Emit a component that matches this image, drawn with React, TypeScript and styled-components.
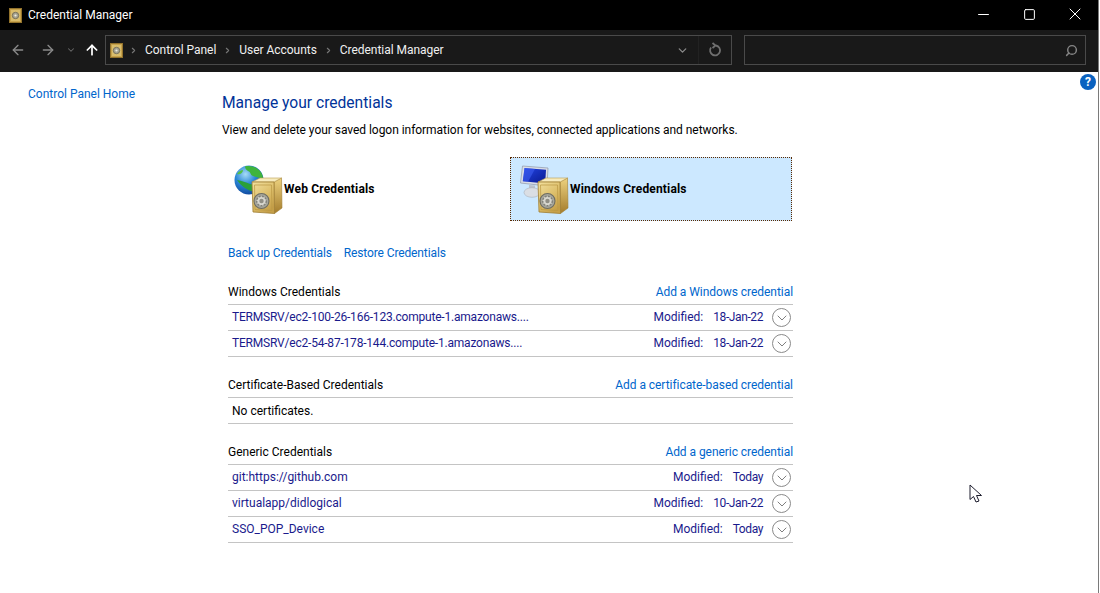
import React, { FC } from "react";
import styled, { createGlobalStyle } from "styled-components";
import { ArrowLeft, ArrowRight, ArrowUp, ChevronDown, ChevronRight, Search, Minus, Square, X } from "lucide-react";

const GlobalStyle = createGlobalStyle`
  html, body {
    margin: 0;
    padding: 0;
    background: #fff;
    overflow: hidden;
  }
  body {
    font-family: Roboto, "Noto Sans", sans-serif;
    font-size: 12px;
  }
`;

const SafeSmall: FC = () => (
  <svg width="13" height="15" viewBox="0 0 13 15">
    <rect x="0.5" y="0.5" width="12" height="14" fill="#c7a24c" stroke="#93732c" />
    <rect x="2" y="2" width="9" height="11" fill="#d9bd6c" />
    <circle cx="6.5" cy="7.5" r="3.2" fill="#a8a592" stroke="#76705a" />
    <circle cx="6.5" cy="7.5" r="1.1" fill="#ecebe2" />
  </svg>
);

const SafeLarge: FC<{ id: string }> = ({ id }) => (
  <SafeSvg width="32" height="38" viewBox="0 0 32 38">
    <defs>
      <linearGradient id={`${id}Front`} x1="0" y1="0" x2="0.6" y2="1">
        <stop offset="0" stopColor="#f2e09e" />
        <stop offset="0.6" stopColor="#dcbd68" />
        <stop offset="1" stopColor="#c6a04a" />
      </linearGradient>
      <linearGradient id={`${id}Side`} x1="0" y1="0" x2="0" y2="1">
        <stop offset="0" stopColor="#edd27f" />
        <stop offset="1" stopColor="#a47c2c" />
      </linearGradient>
    </defs>
    <path d="M23 5 L30.5 1 L31 31 L23.5 36.5 Z" fill={`url(#${id}Side)`} stroke="#a07e32" strokeWidth="0.6" />
    <path d="M1 5 L9 1 L30.5 1 L23 5 Z" fill="#f7ebbd" stroke="#bb9b4e" strokeWidth="0.6" />
    <path d="M1 5 L23 5 L23.5 36.5 L2 35 Z" fill={`url(#${id}Front)`} stroke="#a07e32" strokeWidth="0.8" />
    <path d="M3.5 8 L20.5 8 L21 33.5 L4 32.5 Z" fill="none" stroke="#b99642" strokeWidth="0.7" />
    <circle cx="10.5" cy="24" r="7.5" fill="#a6a69c" stroke="#6d6c62" strokeWidth="1.1" />
    <circle cx="10.5" cy="24" r="4.8" fill="#d8d7cf" stroke="#80807a" strokeWidth="1.4" strokeDasharray="2 1.2" />
    <circle cx="10.5" cy="24" r="2.2" fill="#8f8e85" />
  </SafeSvg>
);

const Globe: FC = () => (
  <GlobeSvg width="30" height="30" viewBox="0 0 30 30">
    <defs>
      <radialGradient id="sea" cx="0.38" cy="0.3" r="0.8">
        <stop offset="0" stopColor="#a6dcf6" />
        <stop offset="0.45" stopColor="#2a86d6" />
        <stop offset="1" stopColor="#0a3c92" />
      </radialGradient>
    </defs>
    <circle cx="15" cy="15" r="14.5" fill="url(#sea)" />
    <path d="M11 1.5 C16 0 22 2 25 5 C28 8 29 11 29 14 C25 13 22 12 19 11 C16 10 17 7 14 6 C12 5 11 3 11 1.5 Z" fill="#3fb43c" />
    <path d="M3 15 C8 16 12 17 16 19 C19 20 23 20 25 19 C24 23 20 26 17 26 C12 24 7 21 3 15 Z" fill="#2aa03a" />
    <path d="M3 9 C5 6 7 5 9 5 C9 8 6 10 3 9 Z" fill="#55c048" />
  </GlobeSvg>
);

const Monitor: FC = () => (
  <MonitorSvg width="29" height="33" viewBox="0 0 29 33">
    <defs>
      <linearGradient id="screen" x1="0" y1="0" x2="1" y2="1">
        <stop offset="0" stopColor="#2244e4" />
        <stop offset="1" stopColor="#0a1a8f" />
      </linearGradient>
    </defs>
    <path d="M2.5 1 L28 3 L27 21 L0.5 18 Z" fill="#d9dde7" stroke="#8e96a8" strokeWidth="0.7" />
    <path d="M4.5 3 L26 4.8 L25.2 18.5 L2.8 16.2 Z" fill="url(#screen)" />
    <path d="M4.5 3 L15 3.9 L8 16.7 L2.8 16.2 Z" fill="#3f60f2" opacity="0.55" />
    <path d="M9 20 L15 20.5 L15 25 L9 25 Z" fill="#bcc2cc" />
    <ellipse cx="12" cy="27.5" rx="8" ry="4.8" fill="#dadee4" stroke="#aab0ba" strokeWidth="0.6" />
  </MonitorSvg>
);

const Refresh: FC = () => (
  <svg width="14" height="16" viewBox="0 0 14 16" fill="none" stroke="#6f6f6f" strokeWidth="1.8">
    <path d="M8 3.5 A5 5 0 1 1 3 5.5" />
    <path d="M4.5 1 L7.5 3.5 L4.5 6" />
  </svg>
);

const Row: FC<{ name: string; date: string; $tight?: boolean }> = ({ name, date, $tight }) => (
  <ListRow>
    <RowName $tight={$tight}>{name}</RowName>
    <RowMeta>
      <span>Modified:</span>
      <RowDate>{date}</RowDate>
    </RowMeta>
    <Expander>
      <ChevronDown size={16} absoluteStrokeWidth strokeWidth={1} color="#7f7f7f" />
    </Expander>
  </ListRow>
);

const Section: FC<{ title: string; action: string; children: React.ReactNode }> = ({
  title,
  action,
  children,
}) => (
  <SectionBox>
    <SectionHeader>
      <span>{title}</span>
      <HeaderLink>{action}</HeaderLink>
    </SectionHeader>
    {children}
  </SectionBox>
);

const App: FC = () => {
  return (
    <Window>
      <GlobalStyle />
      <TitleBar>
        <TitleLeft>
          <SafeSmall />
          <span>Credential Manager</span>
        </TitleLeft>
        <WindowButtons>
          <WinBtn>
            <Minus size={17} absoluteStrokeWidth strokeWidth={1} color="#fff" />
          </WinBtn>
          <WinBtn>
            <Square size={13} absoluteStrokeWidth strokeWidth={1} color="#fff" />
          </WinBtn>
          <WinBtn>
            <X size={20} absoluteStrokeWidth strokeWidth={1} color="#fff" />
          </WinBtn>
        </WindowButtons>
      </TitleBar>
      <NavBar>
        <NavButtons>
          <ArrowLeft size={16} strokeWidth={2} color="#8a8a8a" />
          <ArrowRight size={16} strokeWidth={2} color="#8a8a8a" />
          <ChevronDown size={10} strokeWidth={2.5} color="#6a6a6a" />
          <ArrowUp size={16} strokeWidth={2.6} color="#fff" />
        </NavButtons>
        <AddressBar>
          <SafeSmall />
          <Crumbs>
            <ChevronRight size={9} strokeWidth={3} color="#777" />
            <span>Control Panel</span>
            <ChevronRight size={9} strokeWidth={3} color="#777" />
            <span>User Accounts</span>
            <ChevronRight size={9} strokeWidth={3} color="#777" />
            <span>Credential Manager</span>
          </Crumbs>
          <AddressTools>
            <ChevronDown size={13} strokeWidth={2.4} color="#8a8a8a" />
            <RefreshBox>
              <Refresh />
            </RefreshBox>
          </AddressTools>
        </AddressBar>
        <SearchBox>
          <Search size={13} strokeWidth={2.7} color="#858585" style={{ transform: "scaleX(-1)" }} />
        </SearchBox>
      </NavBar>
      <Content>
        <Sidebar>
          <Link>Control Panel Home</Link>
        </Sidebar>
        <Main>
          <Heading>Manage your credentials</Heading>
          <Description>
            View and delete your saved logon information for websites, connected applications and networks.
          </Description>
          <Tiles>
            <Tile>
              <IconStack>
                <Globe />
                <SafeLarge id="webSafe" />
              </IconStack>
              <TileLabel>Web Credentials</TileLabel>
            </Tile>
            <Tile $selected>
              <IconStack>
                <Monitor />
                <SafeLarge id="winSafe" />
              </IconStack>
              <TileLabel>Windows Credentials</TileLabel>
            </Tile>
          </Tiles>
          <Actions>
            <Link>Back up Credentials</Link>
            <Link>Restore Credentials</Link>
          </Actions>
          <Section title="Windows Credentials" action="Add a Windows credential">
            <Row $tight name="TERMSRV/ec2-100-26-166-123.compute-1.amazonaws...." date="18-Jan-22" />
            <Row $tight name="TERMSRV/ec2-54-87-178-144.compute-1.amazonaws...." date="18-Jan-22" />
          </Section>
          <Section title="Certificate-Based Credentials" action="Add a certificate-based credential">
            <EmptyRow>No certificates.</EmptyRow>
          </Section>
          <Section title="Generic Credentials" action="Add a generic credential">
            <Row name="git:https://github.com" date="Today" />
            <Row name="virtualapp/didlogical" date="10-Jan-22" />
            <Row name="SSO_POP_Device" date="Today" />
          </Section>
        </Main>
        <HelpBadge>?</HelpBadge>
      </Content>
      <Pointer width="14" height="20" viewBox="0 0 14 20">
        <path
          d="M1 1 L1 15.5 L4.5 12.5 L7 18 L10 17 L7.5 11.5 L12.5 11.5 Z"
          fill="#fff"
          stroke="#1c1c2c"
          strokeWidth="1"
        />
      </Pointer>
    </Window>
  );
};

const Window = styled.div`
  position: relative;
  width: 1099px;
  height: 593px;
  box-sizing: border-box;
  border-right: 1px solid #7a7a7a;
  display: flex;
  flex-direction: column;
  background: #fff;
  color: #000;
`;

const TitleBar = styled.div`
  height: 30px;
  flex: none;
  background: #000;
  color: #fff;
  display: flex;
  align-items: center;
  justify-content: space-between;
`;

const TitleLeft = styled.div`
  display: flex;
  align-items: center;
  gap: 6px;
  padding-left: 9px;
`;

const WindowButtons = styled.div`
  display: flex;
`;

const WinBtn = styled.div`
  width: 46px;
  height: 28px;
  padding-bottom: 2px;
  display: flex;
  align-items: center;
  justify-content: center;
`;

const NavBar = styled.div`
  height: 42px;
  flex: none;
  background: #191919;
  display: flex;
  align-items: flex-start;
  padding: 5px 12px 0 10px;
  box-sizing: border-box;
`;

const NavButtons = styled.div`
  width: 95px;
  height: 29px;
  display: grid;
  grid-template-columns: 30px 26px 18px 16px;
  align-items: center;
  flex: none;
`;

const AddressBar = styled.div`
  width: 627px;
  height: 30px;
  box-sizing: border-box;
  border: 1px solid #4a4a4a;
  flex: none;
  display: flex;
  align-items: center;
  padding-left: 4px;
  color: #f0f0f0;
`;

const Crumbs = styled.div`
  flex: 1;
  display: flex;
  align-items: center;
  gap: 7px;
  padding-left: 6px;
  letter-spacing: -0.04px;
`;

const AddressTools = styled.div`
  display: flex;
  align-items: center;
  height: 100%;
  gap: 9px;
`;

const RefreshBox = styled.div`
  width: 32px;
  height: 100%;
  border-left: 1px solid #222;
  display: flex;
  align-items: center;
  justify-content: center;
`;

const SearchBox = styled.div`
  width: 342px;
  height: 30px;
  margin-left: 12px;
  box-sizing: border-box;
  border: 1px solid #4a4a4a;
  flex: none;
  display: flex;
  align-items: center;
  justify-content: flex-end;
  padding-right: 7px;
`;

const Content = styled.div`
  position: relative;
  flex: 1;
  display: flex;
  min-height: 0;
`;

const Sidebar = styled.div`
  width: 222px;
  flex: none;
  box-sizing: border-box;
  padding: 14px 0 0 28px;
`;

const Main = styled.div`
  width: 572px;
  display: flex;
  flex-direction: column;
`;

const Link = styled.a`
  color: #0066cc;
  line-height: 16px;
`;

const HeaderLink = styled(Link)`
  letter-spacing: -0.05px;
`;

const Heading = styled.h1`
  margin: 20px 0 0;
  font-size: 15.6px;
  font-weight: 400;
  line-height: 22px;
  color: #003399;
`;

const Description = styled.p`
  margin: 8px 0 0;
  line-height: 17px;
  letter-spacing: -0.04px;
`;

const Tiles = styled.div`
  display: flex;
  gap: 4px;
  margin: 18px 0 0 2px;
`;

const Tile = styled.div<{ $selected?: boolean }>`
  width: 282px;
  height: 64px;
  box-sizing: border-box;
  display: flex;
  align-items: center;
  padding-left: 9px;
  background: ${(p) => (p.$selected ? "#cce8ff" : "transparent")};
  border: 1px dotted ${(p) => (p.$selected ? "#5c2a00" : "transparent")};
`;

const IconStack = styled.div`
  position: relative;
  width: 50px;
  height: 50px;
  flex: none;
`;

const GlobeSvg = styled.svg`
  position: absolute;
  left: 0;
  top: 1px;
`;

const MonitorSvg = styled.svg`
  position: absolute;
  left: 0;
  top: 1px;
`;

const SafeSvg = styled.svg`
  position: absolute;
  left: 17px;
  top: 13px;
`;

const TileLabel = styled.span`
  font-weight: 700;
  font-size: 12px;
  letter-spacing: 0.17px;
`;

const Actions = styled.div`
  display: flex;
  gap: 12px;
  margin: 24px 0 0 6px;
  line-height: 16px;
  letter-spacing: -0.12px;
`;

const SectionBox = styled.section`
  margin: 15px 0 0 6px;
  width: 565px;

  &:first-of-type {
    margin-top: 18px;
  }
`;

const SectionHeader = styled.div`
  height: 26px;
  box-sizing: border-box;
  display: flex;
  align-items: center;
  justify-content: space-between;
  border-bottom: 1px solid #c4c4c4;
`;

const ListRow = styled.div`
  height: 26px;
  box-sizing: border-box;
  display: flex;
  align-items: center;
  padding: 0 2px 0 4px;
  border-bottom: 1px solid #c4c4c4;
  color: #1a1a8c;
`;

const RowName = styled.span<{ $tight?: boolean }>`
  flex: 1;
  padding-bottom: 2px;
  letter-spacing: ${(p) => (p.$tight ? "-0.2px" : "0")};
`;

const RowMeta = styled.span`
  display: flex;
  gap: 10px;
  padding-bottom: 2px;
`;

const RowDate = styled.span`
  letter-spacing: -0.4px;
`;

const Expander = styled.span`
  width: 19px;
  height: 19px;
  margin-left: 9px;
  box-sizing: border-box;
  border: 1px solid #8a8a8a;
  border-radius: 50%;
  display: flex;
  align-items: center;
  justify-content: center;
`;

const EmptyRow = styled.div`
  height: 26px;
  box-sizing: border-box;
  display: flex;
  align-items: center;
  padding-left: 4px;
  border-bottom: 1px solid #c4c4c4;
`;

const HelpBadge = styled.span`
  position: absolute;
  right: 2px;
  top: 2px;
  width: 16px;
  height: 16px;
  border-radius: 50%;
  background: #0a62c0;
  color: #fff;
  font-weight: 700;
  font-size: 12px;
  line-height: 16px;
  text-align: center;
`;

const Pointer = styled.svg`
  position: absolute;
  left: 969px;
  top: 484px;
`;

export default App;
